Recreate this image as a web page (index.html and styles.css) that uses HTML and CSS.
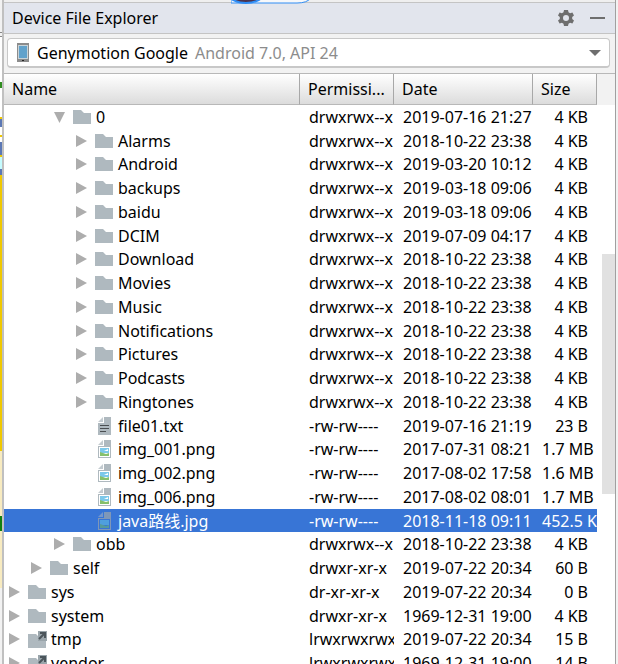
FILE: index.html
```
<!DOCTYPE html>
<html lang="en">
<head>
<meta charset="utf-8">
<title>Device File Explorer</title>
<link rel="stylesheet" href="styles.css">
</head>
<body>
<svg class="defs" aria-hidden="true">
  <symbol id="folder" viewBox="0 0 18 14"><path d="M0 0h8l3 3h7v11H0z" fill="#afb9bf"/></symbol>
  <symbol id="link" viewBox="0 0 19 17"><path d="M0 3h8l3 3h7v11H0z" fill="#afb9bf"/><path d="M10 0h9v10h-9z" fill="#9aa5ab"/><path d="M12 2h5v5M17 2l-6 6" fill="none" stroke="#4b555b" stroke-width="2"/></symbol>
  <symbol id="text" viewBox="0 0 13 18"><path d="M6 0h7v18H0V6h6z" fill="#afb9bf"/><path d="M0 5l5-5v5z" fill="#c3cbd0"/><path d="M2 8.500h9M2 11.500h9M2 14.500h6" stroke="#4b4f52" stroke-width="1"/></symbol>
  <symbol id="image" viewBox="0 0 13 18"><path d="M6 0h7v18H0V6h6z" fill="#afb9bf"/><path d="M0 5l5-5v5z" fill="#c3cbd0"/><path d="M1 7h11v10H1z" fill="#fff"/><path d="M2 8h9v5H2z" fill="#7cc8ea"/><path d="M2 16v-4l3 1 3 1 3-1v3z" fill="#86c06c"/><path d="M6 11l4-2v2z" fill="#fff"/></symbol>
  <symbol id="image-on" viewBox="0 0 13 18"><path d="M6 0h7v18H0V6h6z" fill="#7f97b8"/><path d="M0 5l5-5v5z" fill="#7697cb"/><path d="M1 7h11v10H1z" fill="#3875d6"/><path d="M2 8h9v5H2z" fill="#4f9fdd"/><path d="M2 16v-4l3 1 3 1 3-1v3z" fill="#559a9b"/></symbol>
</svg>
<div class="window">
  <div class="editor-edge"></div>
  <section class="panel">
    <div class="top-edge"><svg class="avatar" viewBox="0 0 86 5"><path d="M0 3H66Q76 3 80-2H0z" fill="#f7f8fa" stroke="#2f8df5" stroke-width="1"/><ellipse cx="15" cy="-6" rx="17" ry="9" fill="#4a3350" stroke="#2f8df5" stroke-width="2"/></svg></div>
    <header class="title-bar">
      <h1>Device File Explorer</h1>
      <button type="button" aria-label="Settings"><svg width="16" height="16" viewBox="0 0 16 16"><path fill="#6e6e6e" fill-rule="evenodd" d="M6 0h4l.5 2.300 1.600.9 2.300-.8 1.600 3-1.800 1.600v2l1.800 1.600-1.600 3-2.300-.8-1.600.9L10 16H6l-.5-2.300-1.600-.9-2.300.8-1.600-3L1.800 9V7L0 5.400l1.600-3 2.300.8 1.600-.9zM8 5a3 3 0 100 6 3 3 0 000-6z"/></svg></button>
      <button type="button" aria-label="Hide"><svg width="16" height="16" viewBox="0 0 16 16"><path fill="#6e6e6e" d="M0 7h15v2H0z"/></svg></button>
    </header>
    <div class="device-bar">
      <button type="button" class="device">
        <svg width="12" height="19" viewBox="0 0 12 19"><path d="M0 0h12v19H0z" fill="#8c8c8c"/><path d="M1 2h10v14H1z" fill="#c9d3d8"/><path d="M2 3h8v12H2z" fill="#62a2cb"/><path d="M5 17h2v1H5z" fill="#222"/></svg>
        <span class="device-name">Genymotion Google</span>
        <span class="device-os">Android 7.0, API 24</span>
        <svg class="arrow" width="12" height="6" viewBox="0 0 12 6"><path d="M0 0h12L6 6z" fill="#6e6e6e"/></svg>
      </button>
    </div>
    <div class="files">
      <table>
        <colgroup><col><col class="c-perm"><col class="c-date"><col class="c-size"></colgroup>
        <thead><tr><th>Name</th><th>Permissi...</th><th>Date</th><th>Size</th></tr></thead>
        <tbody id="rows"></tbody>
      </table>
      <div class="scroll"><div class="corner"></div><div class="thumb"></div></div>
    </div>
  </section>
  <div class="right-edge"></div>
</div>
<script src="files.js"></script>
</body>
</html>
```
FILE: files.js
```
const D = "drwxrwx--x", F = "-rw-rw----", O = "2018-10-22 23:38";
// [depth, icon, name, permissions, date, size, state]
const files = [
  [2, "folder", "0", D, "2019-07-16 21:27", "4 KB", "open"],
  [3, "folder", "Alarms", D, O, "4 KB"],
  [3, "folder", "Android", D, "2019-03-20 10:12", "4 KB"],
  [3, "folder", "backups", D, "2019-03-18 09:06", "4 KB"],
  [3, "folder", "baidu", D, "2019-03-18 09:06", "4 KB"],
  [3, "folder", "DCIM", D, "2019-07-09 04:17", "4 KB"],
  [3, "folder", "Download", D, O, "4 KB"],
  [3, "folder", "Movies", D, O, "4 KB"],
  [3, "folder", "Music", D, O, "4 KB"],
  [3, "folder", "Notifications", D, O, "4 KB"],
  [3, "folder", "Pictures", D, O, "4 KB"],
  [3, "folder", "Podcasts", D, O, "4 KB"],
  [3, "folder", "Ringtones", D, O, "4 KB"],
  [3, "text", "file01.txt", F, "2019-07-16 21:19", "23 B"],
  [3, "image", "img_001.png", F, "2017-07-31 08:21", "1.7 MB"],
  [3, "image", "img_002.png", F, "2017-08-02 17:58", "1.6 MB"],
  [3, "image", "img_006.png", F, "2017-08-02 08:01", "1.7 MB"],
  [3, "image-on", "java路线.jpg", F, "2018-11-18 09:11", "452.5 KB", "selected"],
  [2, "folder", "obb", D, O, "4 KB"],
  [1, "folder", "self", "drwxr-xr-x", "2019-07-22 20:34", "60 B"],
  [0, "folder", "sys", "dr-xr-xr-x", "2019-07-22 20:34", "0 B"],
  [0, "folder", "system", "drwxr-xr-x", "1969-12-31 19:00", "4 KB"],
  [0, "link", "tmp", "lrwxrwxrwx", "2019-07-22 20:34", "15 B"],
  [0, "link", "vendor", "lrwxrwxrwx", "1969-12-31 19:00", "14 B"]
];
const sizes = { folder: [18, 14], link: [19, 17], text: [13, 18], image: [13, 18], "image-on": [13, 18] };
document.getElementById("rows").innerHTML = files.map(([depth, icon, name, perm, date, size, state]) => {
  const [w, h] = sizes[icon];
  const toggle = icon === "folder" || icon === "link"
    ? `<svg class="toggle" width="11" height="12" viewBox="0 0 11 12"><path d="${state === "open" ? "M0 1h11L5.500 12z" : "M0 0l11 6-11 6z"}" fill="#adadad"/></svg>`
    : `<span class="toggle"></span>`;
  return `<tr class="${state || ""}"><td><div class="name depth-${depth}">${toggle}<span class="icon ${icon}"><svg width="${w}" height="${h}"><use href="#${icon}"/></svg></span>${name}</div></td><td>${perm}</td><td>${date}</td><td class="size">${size}</td></tr>`;
}).join("");
```
FILE: styles.css
```
* { box-sizing: border-box; }
body { margin: 0; background: #f2f2f2; color: #000; font: 16px/22px "Noto Sans", "Noto Sans CJK SC", sans-serif; }
button { font: inherit; color: inherit; border: 0; padding: 0; background: none; display: flex; }
svg { display: block; flex: none; }
.defs { position: absolute; width: 0; height: 0; }
.window { display: flex; height: 100vh; overflow: hidden; }
.editor-edge { flex: none; width: 4px; border-right: 2px solid #c0c0c0;
  background: linear-gradient(#f2f2f2 0 32px, #888 32px 33px, #f2f2f2 33px 36px, #888 36px 37px, #fff 37px 82px, #2f8d20 82px 88px, #fff 88px 117px, #f0c800 117px 119px, #5c78b5 119px 127px, #fff 127px 135px, #f0c800 135px 137px, #fff 137px 142px, #5c78b5 142px 155px, #f0c800 155px 157px, #c5fcff 157px 169px, #5c78b5 169px 175px, #f0c800 175px 451px, #f8ebc0 451px 516px, #118011 516px 531px, #f8ebc0 531px 588px, #f2f2f2 588px); }
.panel { flex: 1; min-width: 0; display: flex; flex-direction: column; }
.top-edge { flex: none; height: 3px; background: #efefef; border-bottom: 1px solid #c4c4c4; padding-left: 227px; }
.avatar { position: relative; width: 86px; height: 5px; }
.title-bar { flex: none; display: flex; align-items: center; gap: 16px; height: 31px; padding: 0 9px 0 8px; background: #e2e5ed; border-bottom: 1px solid #c4c4c4; }
h1 { flex: 1; margin: 0; font: inherit; }
.device-bar { flex: none; padding: 4px 5px 5px 3px; border-bottom: 1px solid #b8b8b8; }
.device { width: 100%; height: 30px; align-items: center; background: #fff; border: 1px solid #c8c8c8; border-bottom-width: 2px; border-radius: 4px; padding: 0 8px 0 9px; text-align: left; }
.device-name { margin-left: 8px; }
.device-os { margin-left: 7px; color: #8c8c8c; flex: 1; }
.files { flex: 1; min-height: 0; display: flex; background: #fff; }
table { flex: 1; min-width: 0; width: 100%; align-self: flex-start; table-layout: fixed; border-collapse: separate; border-spacing: 0; }
.c-perm { width: 94px; }
.c-date { width: 139px; }
.c-size { width: 64px; }
th { height: 31px; padding: 0 8px; text-align: left; font-weight: 400; background: linear-gradient(#fff, #dcdcdc); border-right: 1px solid #a8a8a8; border-bottom: 1px solid #b8b8b8; white-space: nowrap; overflow: hidden; }
td { height: 24px; padding: 0 0 0 9px; white-space: nowrap; overflow: hidden; }
tr:nth-child(4n + 2) td { height: 23px; }
td:first-child { padding: 0; }
.size { padding-right: 9px; text-align: right; }
.selected { background: #3875d6; color: #fff; }
.name { display: flex; align-items: center; }
.depth-0 { padding-left: 5px; }
.depth-1 { padding-left: 27px; }
.depth-2 { padding-left: 50px; }
.depth-3 { padding-left: 72px; }
.toggle { width: 11px; margin-right: 8px; }
.icon { display: flex; justify-content: center; width: 18px; margin-right: 5px; }
.icon.link { justify-content: flex-start; }
.scroll { flex: none; width: 18px; }
.corner { height: 31px; background: #f2f2f2; }
.thumb { width: 13px; height: 240px; margin: 149px 0 0 5px; background: #e1e1e1; }
.right-edge { flex: none; width: 3px; border-left: 1px solid #a0a0a0; background: #f2f2f2; }
```
